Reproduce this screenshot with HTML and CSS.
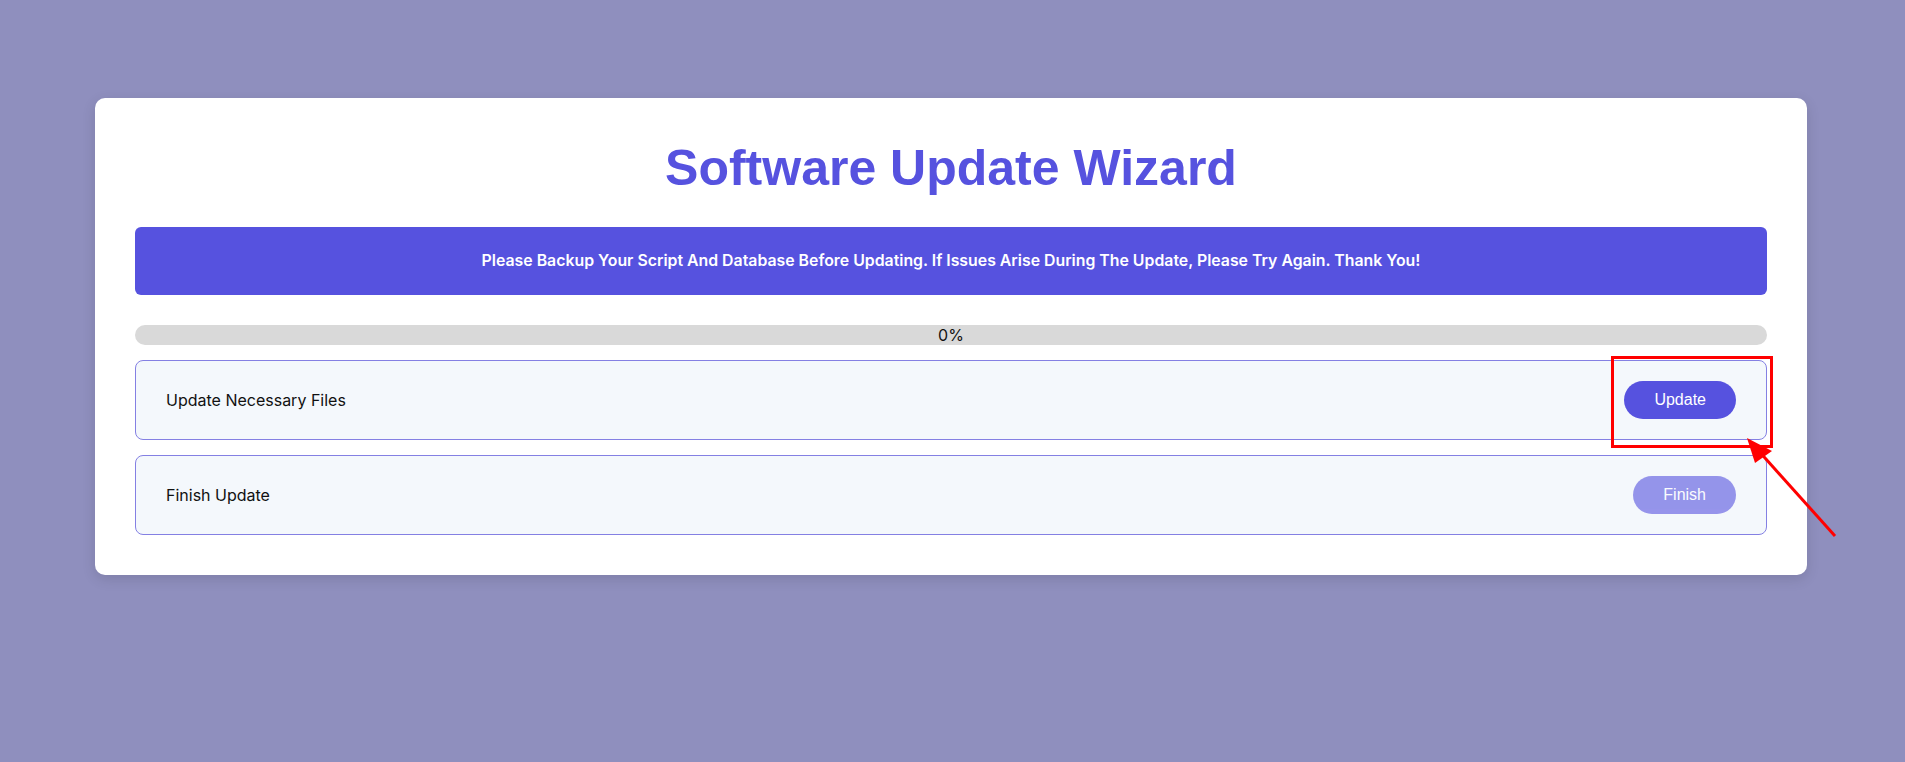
FILE: index.html
```html
<!DOCTYPE html>
<html lang="en">
<head>
<meta charset="utf-8">
<title>Software Update Wizard</title>
<link rel="stylesheet" href="styles.css">
</head>
<body>
<div class="card">
  <h1 class="title">Software Update Wizard</h1>
  <div class="notice">Please Backup Your Script And Database Before Updating. If Issues Arise During The Update, Please Try Again. Thank You!</div>
  <div class="progress"><div class="progress-fill" style="width:0%"></div><span class="progress-label">0%</span></div>
  <div class="steps">
    <div class="step">
      <span class="step-label">Update Necessary Files</span>
      <button class="btn">Update</button>
    </div>
    <div class="step">
      <span class="step-label">Finish Update</span>
      <button class="btn btn-disabled" disabled>Finish</button>
    </div>
  </div>
</div>
<div class="highlight"></div>
<svg class="arrow" width="120" height="120" viewBox="0 0 120 120">
  <line x1="108" y1="117" x2="30" y2="30" stroke="#ff0000" stroke-width="3"/>
  <polygon points="20,19 28,44 45,32" fill="#ff0000"/>
</svg>
</body>
</html>
```
FILE: styles.css
```css
* { box-sizing: border-box; }
html, body { margin: 0; padding: 0; }
body {
  background: #8f8fbe;
  font-family: "Inter", "Liberation Sans", sans-serif;
  min-height: 762px;
  padding-top: 98px;
}
.card {
  width: 1712px;
  margin: 0 0 0 95px;
  background: #ffffff;
  border-radius: 10px;
  padding: 40px;
  box-shadow: 0 4px 14px rgba(0, 0, 0, 0.12);
}
.title {
  margin: 0 0 29px;
  font-family: "Liberation Sans", Arial, sans-serif;
  font-size: 50px;
  line-height: 60px;
  font-weight: 700;
  color: #5652df;
  text-align: center;
}
.notice {
  background: #5652df;
  color: #ffffff;
  border-radius: 6px;
  padding: 24px 20px;
  text-align: center;
  font-size: 15.85px;
  line-height: 20px;
  font-weight: 600;
  margin-bottom: 30px;
}
.progress {
  position: relative;
  height: 20px;
  background: #d9d9d9;
  border-radius: 10px;
  overflow: hidden;
  margin-bottom: 15px;
  display: flex;
  justify-content: center;
  align-items: center;
}
.progress-fill {
  position: absolute;
  left: 0; top: 0; bottom: 0;
  background: #5652df;
}
.progress-label {
  position: relative;
  font-size: 16px;
  line-height: 20px;
  color: #111111;
}
.steps {
  display: flex;
  flex-direction: column;
  gap: 15px;
}
.step {
  height: 80px;
  display: flex;
  justify-content: space-between;
  align-items: center;
  padding: 0 30px;
  background: #f4f8fc;
  border: 1px solid #8480e3;
  border-radius: 8px;
}
.step-label {
  font-size: 16px;
  color: #111111;
}
.btn {
  font-family: "Liberation Sans", Arial, sans-serif;
  font-size: 16px;
  line-height: 18px;
  padding: 10px 30px;
  border: none;
  border-radius: 20px;
  background: #5652df;
  color: #ffffff;
  cursor: pointer;
}
.btn-disabled {
  opacity: 0.6;
  cursor: default;
}
.highlight {
  position: absolute;
  left: 1611px;
  top: 356px;
  width: 162px;
  height: 92px;
  border: 3px solid #ff0000;
}
.arrow {
  position: absolute;
  left: 1727px;
  top: 419px;
}
```
